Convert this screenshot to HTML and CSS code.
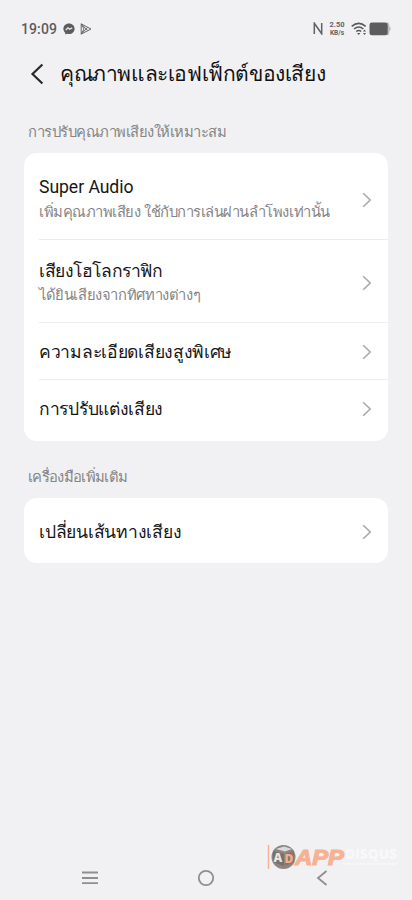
FILE: index.html
```html
<!DOCTYPE html>
<html lang="th">
<head>
<meta charset="utf-8">
<meta name="viewport" content="width=device-width, initial-scale=1">
<title>คุณภาพและเอฟเฟ็กต์ของเสียง</title>
<link rel="stylesheet" href="styles.css">
</head>
<body>
<div class="screen">
  <div class="status">
    <span class="clock">19:09</span>
    <svg class="messenger" width="12" height="12" viewBox="0 0 12 12"><path d="M6 .4C2.800.4.4 2.700.4 5.800c0 1.700.700 3 1.800 4V11.600l1.700-.9c.7.200 1.400.3 2.100.3 3.200 0 5.600-2.300 5.600-5.300S9.200.4 6 .4z" fill="#5c5c5e"/><path d="M2.700 7.100 5 4.800l1.800 1.500 2.400-1.600" fill="none" stroke="#f1f1f3" stroke-width="1.200"/></svg>
    <svg class="play" width="12" height="12" viewBox="0 0 12 12"><path d="M1.200.9v10.200L11 6zM1.200.9l6.600 6.800M1.200 11.100l6.600-6.800M1.200.9 4 6l-2.800 5.100" fill="none" stroke="#68686a" stroke-width="1" stroke-linejoin="round"/></svg>
    <svg class="nfc" width="10" height="13" viewBox="0 0 10 13"><path d="M1.300 12V1.200L8.700 11.800V1" fill="none" stroke="#626264" stroke-width="1.500"/></svg>
    <span class="speed"><b>2.50</b><b class="unit">KB/s</b></span>
    <svg class="wifi" width="16" height="14" viewBox="0 0 16 14"><g fill="none" stroke="#59595b" stroke-width="1.500"><path d="M.7 4.400Q7.700-1.600 14.700 4.400M3 7Q7.700 3.200 12.400 7M5.200 9.500Q7.700 7.700 10.200 9.500"/></g><path d="M6 11h3.400L7.700 13z" fill="#59595b"/><path d="m13.500 7.600 1.500 2h-3zm0 5.300 1.500-2h-3z" fill="#59595b"/></svg>
    <svg class="battery" width="22" height="14" viewBox="0 0 22 14"><path d="M18 .5h1q1.200.4 1.200 2v1.700q1.500.3 1.500 2.600T20.200 9.400v2q0 1.500-1.200 1.900h-1z" fill="#bdbdbf"/><rect x=".5" y=".5" width="18.200" height="12.800" rx="2.400" fill="#5c5c5e"/></svg>
  </div>

  <header class="header">
    <svg width="14" height="22" viewBox="0 0 14 22"><path d="M12.400 1.500 2.500 11l9.900 9.500" fill="none" stroke="#29292b" stroke-width="2.200"/></svg>
    <h1><span class="t-title">คุณภาพและเอฟเฟ็กต์ของเสียง</span></h1>
  </header>

  <h2 class="section first"><span class="t-sec1">การปรับคุณภาพเสียงให้เหมาะสม</span></h2>
  <div class="card">
    <div class="row super">
      <div class="copy"><div class="name latin">Super Audio</div><div class="desc t-desc1">เพิ่มคุณภาพเสียง ใช้กับการเล่นผ่านลำโพงเท่านั้น</div></div>
      <svg class="chev" width="10" height="16" viewBox="0 0 10 16"><path d="m1.200 1.200 7 6.800-7 6.800"/></svg>
    </div>
    <div class="row holo">
      <div class="copy"><div class="name t-holo">เสียงโฮโลกราฟิก</div><div class="desc t-desc2">ได้ยินเสียงจากทิศทางต่างๆ</div></div>
      <svg class="chev" width="10" height="16" viewBox="0 0 10 16"><path d="m1.200 1.200 7 6.800-7 6.800"/></svg>
    </div>
    <div class="row single">
      <div class="copy"><div class="name t-hires">ความละเอียดเสียงสูงพิเศษ</div></div>
      <svg class="chev" width="10" height="16" viewBox="0 0 10 16"><path d="m1.200 1.200 7 6.800-7 6.800"/></svg>
    </div>
    <div class="row tune">
      <div class="copy"><div class="name t-tune">การปรับแต่งเสียง</div></div>
      <svg class="chev" width="10" height="16" viewBox="0 0 10 16"><path d="m1.200 1.200 7 6.800-7 6.800"/></svg>
    </div>
  </div>

  <h2 class="section second"><span class="t-sec2">เครื่องมือเพิ่มเติม</span></h2>
  <div class="card">
    <div class="row route">
      <div class="copy"><div class="name t-route">เปลี่ยนเส้นทางเสียง</div></div>
      <svg class="chev" width="10" height="16" viewBox="0 0 10 16"><path d="m1.200 1.200 7 6.800-7 6.800"/></svg>
    </div>
  </div>

  <nav class="nav">
    <svg width="18" height="18" viewBox="0 0 18 18"><path d="M1 3.500h16M1 9h16M1 14.200h16"/></svg>
    <svg width="18" height="18" viewBox="0 0 18 18"><circle cx="9" cy="9" r="7.200"/></svg>
    <svg width="18" height="18" viewBox="0 0 18 18"><path d="M13.500 2 5 9l8.500 7"/></svg>
  </nav>

  <svg class="watermark" width="144" height="34" viewBox="0 0 144 34">
    <path d="M4.500 5v24" stroke="#f3b397" stroke-width="1.500"/>
    <circle cx="19.500" cy="17" r="12" fill="#8d8581"/>
    <path d="m12 9 8-2.500L28 9l-7 2.500z" fill="#ddd9d8"/>
    <path d="m9 11 11 3v12l-11-4z" fill="#77706d"/>
    <path d="m21 14 9-3v11l-9 4z" fill="#8e7466"/>
    <text x="9.500" y="22" font-size="12" class="mark" fill="#e8e4e2">A</text>
    <text x="20.500" y="22.500" font-size="12" class="mark" fill="#f0ae90">D</text>
    <text x="31" y="25" font-size="22" class="app" textLength="49" lengthAdjust="spacingAndGlyphs" fill="#f6b293" stroke="#f6b293" stroke-width="1.200">APP</text>
    <text x="81" y="19" font-size="14" class="mark" textLength="52" lengthAdjust="spacingAndGlyphs" fill="#f8f8fa">DISQUS</text>
    <path d="M79 24h54" stroke="#f7f7f9" stroke-width="2.500" stroke-dasharray="3 1"/>
  </svg>
</div>
</body>
</html>
```
FILE: styles.css
```css
* { box-sizing: border-box; }
body { margin: 0; background: #f1f1f3; font-family: "Liberation Sans", sans-serif; }
svg { display: block; flex: none; }
.screen { position: relative; width: 412px; height: 900px; overflow: hidden; display: flex; flex-direction: column; background: #f1f1f3; }
.status { height: 57px; padding: 0 21px; display: flex; align-items: center; flex: none; font-family: Roboto, sans-serif; }
.clock { width: 42px; font-size: 14px; font-weight: 500; letter-spacing: .1px; color: #5c5c5e; }
.play { margin-left: 5px; }
.nfc { margin-left: auto; }
.speed { width: 22px; margin: 0 3px 0 3px; display: flex; flex-direction: column; align-items: center; font-size: 7.5px; line-height: 8px; color: #626264; }
.unit { font-size: 6.5px; }
.battery { margin-left: 2px; }
.header { height: 34px; padding-left: 30px; display: flex; align-items: center; gap: 16px; flex: none; }
h1, h2 { margin: 0; font-weight: 400; white-space: nowrap; }
h1 { font-size: 21px; line-height: 34px; letter-spacing: -.4px; color: #111; }
.section { font-size: 14.75px; line-height: 20px; color: #858587; padding-left: 28px; flex: none; }
.first { margin-top: 31px; margin-bottom: 11px; height: 20px; }
.second { margin-top: 26px; margin-bottom: 11px; height: 20px; }
.t-sec1 { letter-spacing: -.49px; }
.t-sec2 { letter-spacing: -.68px; }
.card { margin: 0 24px; padding-left: 15px; background: #fff; border-radius: 13px; flex: none; }
.row { display: flex; align-items: center; justify-content: space-between; padding-right: 16px; }
.row + .row { border-top: 1px solid #ededee; }
.super { height: 86px; padding-top: 7px; }
.holo { height: 83px; padding-top: 3px; }
.single { height: 57px; padding-top: 2px; }
.tune { height: 62px; padding-bottom: 3px; }
.route { height: 65px; padding-top: 3px; }
.copy { white-space: nowrap; }
.name { height: 25px; line-height: 25px; font-size: 17.5px; color: #161616; }
.latin { font-family: Roboto, sans-serif; font-size: 17.6px; letter-spacing: -.05px; }
.t-holo { line-height: 26px; letter-spacing: -.43px; }
.t-hires { letter-spacing: -.29px; }
.t-tune { letter-spacing: -.3px; }
.t-route { letter-spacing: -.25px; }
.desc { height: 24px; line-height: 24px; font-size: 14.75px; color: #858587; }
.t-desc1 { letter-spacing: -.47px; }
.t-desc2 { letter-spacing: -.39px; }
.chev path { fill: none; stroke: #a9a9ab; stroke-width: 1.600; }
.nav { margin-top: auto; height: 45px; padding: 0 81px; display: flex; align-items: center; justify-content: space-between; }
.nav path, .nav circle { fill: none; stroke: #8e8e91; stroke-width: 1.800; }
.watermark { position: absolute; left: 264px; top: 840px; }
.mark { font-family: "Open Sans", sans-serif; font-weight: 800; }
.app { font-family: "Liberation Sans", sans-serif; font-weight: 700; font-style: italic; }
```
